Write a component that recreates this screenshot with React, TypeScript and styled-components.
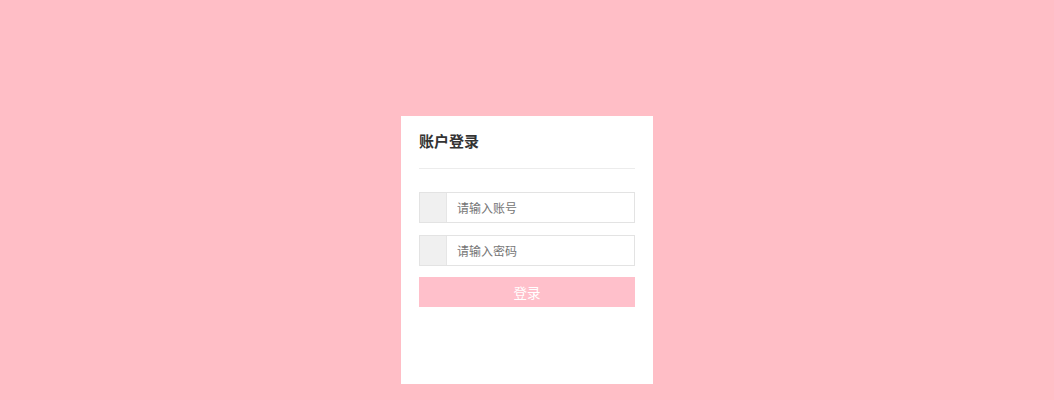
import React, { useState } from "react";
import styled, { createGlobalStyle } from "styled-components";

const GlobalStyle = createGlobalStyle`
    html, body {
        margin: 0;
        padding: 0;
        background: #ffbec6;
        font-family: "Noto Sans CJK SC", "Noto Sans", sans-serif;
    }
`;

const Page = styled.div`
    display: flex;
    justify-content: center;
    padding-top: 116px;
    min-height: 400px;
    box-sizing: border-box;
`;

const Card = styled.div`
    width: 252px;
    height: 268px;
    box-sizing: border-box;
    background: #ffffff;
    padding: 14px 18px 18px;
    display: flex;
    flex-direction: column;
`;

const Title = styled.h2`
    margin: 0;
    font-size: 15px;
    line-height: 22px;
    font-weight: 700;
    color: #333333;
`;

const Divider = styled.div`
    height: 1px;
    background: #ececec;
    margin: 16px 0 23px;
`;

const Field = styled.div<{ gap?: number }>`
    display: flex;
    height: 31px;
    box-sizing: border-box;
    border: 1px solid #e3e3e3;
    margin-bottom: ${({ gap }) => gap ?? 12}px;
`;

const Addon = styled.div`
    width: 26px;
    background: #f0f0f0;
    border-right: 1px solid #e6e6e6;
`;

const Input = styled.input`
    flex: 1;
    min-width: 0;
    border: none;
    outline: none;
    padding: 0 0 0 10px;
    font-family: inherit;
    font-size: 12px;
    color: #333;
    background: transparent;
    ::placeholder {
        color: #777777;
    }
`;

const Submit = styled.button`
    height: 30px;
    border: none;
    background: #ffc0cb;
    color: #ffffff;
    font-family: inherit;
    font-size: 13.5px;
    cursor: pointer;
    padding: 0;
`;

const App = () => {
    const [account, setAccount] = useState("");
    const [password, setPassword] = useState("");
    return (
        <Page>
            <GlobalStyle />
            <Card>
                <Title>账户登录</Title>
                <Divider />
                <Field>
                    <Addon />
                    <Input placeholder="请输入账号" value={account} onChange={(e) => setAccount(e.target.value)} />
                </Field>
                <Field gap={11}>
                    <Addon />
                    <Input type="password" placeholder="请输入密码" value={password} onChange={(e) => setPassword(e.target.value)} />
                </Field>
                <Submit>登录</Submit>
            </Card>
        </Page>
    );
};

export default App;
